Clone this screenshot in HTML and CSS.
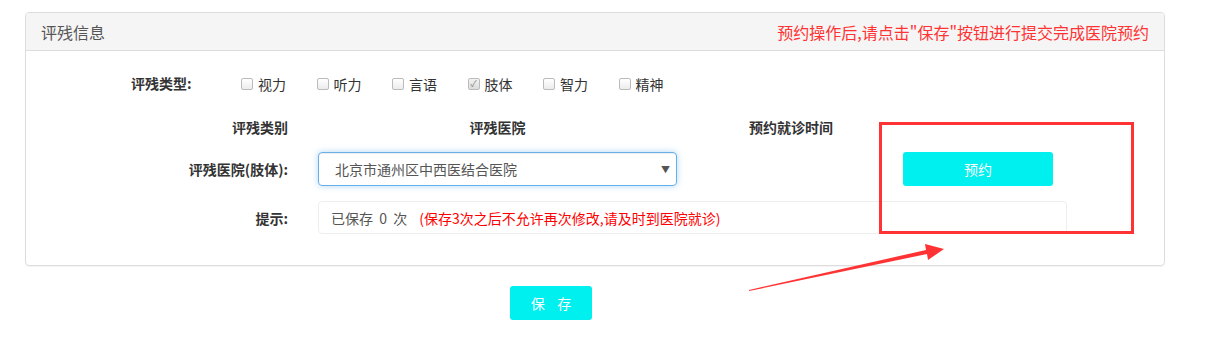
FILE: index.html
```html
<!DOCTYPE html>
<html lang="zh-CN">
<head>
  <meta charset="UTF-8">
  <title>评残信息</title>
  <link rel="stylesheet" href="styles.css">
</head>
<body>
  <!-- 评残信息 panel -->
  <div class="panel">
    <div class="panel-heading">
      <span class="panel-title">评残信息</span>
      <span class="panel-tip">预约操作后,请点击"保存"按钮进行提交完成医院预约</span>
    </div>
    <div class="panel-body">
      <div class="type-row">
        <span class="type-label">评残类型:</span>
        <label class="check"><span class="box"></span>视力</label>
        <label class="check"><span class="box"></span>听力</label>
        <label class="check"><span class="box"></span>言语</label>
        <label class="check"><span class="box checked">✓</span>肢体</label>
        <label class="check"><span class="box"></span>智力</label>
        <label class="check"><span class="box"></span>精神</label>
      </div>

      <div class="head-row">
        <span class="form-label">评残类别</span>
        <span class="head-hospital">评残医院</span>
        <span class="head-time">预约就诊时间</span>
      </div>

      <div class="form-row">
        <span class="form-label">评残医院(肢体):</span>
        <div class="fake-select">
          <span>北京市通州区中西医结合医院</span>
          <span class="caret">▼</span>
        </div>
        <button class="btn btn-book">预约</button>
      </div>

      <div class="form-row tip-row">
        <span class="form-label">提示:</span>
        <div class="tip-box">
          <span class="saved">已保存&nbsp;&nbsp;0&nbsp;&nbsp;次</span>
          <span class="warn">(保存3次之后不允许再次修改,请及时到医院就诊)</span>
        </div>
      </div>
    </div>
  </div>

  <div class="save-row">
    <button class="btn btn-save">保&nbsp;&nbsp;&nbsp;&nbsp;存</button>
  </div>

  <!-- screenshot annotation: red box and arrow -->
  <svg class="annotation" width="1209" height="343" viewBox="0 0 1209 343">
    <rect x="880.5" y="123.5" width="252" height="109" fill="none" stroke="#f33" stroke-width="3"/>
    <polygon points="749,291 927,254 928,260 944,249 925,244 926,250 749,290" fill="#f33"/>
  </svg>
</body>
</html>
```

FILE: styles.css
```css
* {
  margin: 0;
  padding: 0;
  box-sizing: border-box;
}

body {
  font-family: "Noto Sans CJK SC", "Liberation Sans", sans-serif;
  font-size: 14px;
  color: #333;
  background: #fff;
  position: relative;
  width: 1209px;
  height: 343px;
  overflow: hidden;
}

/* Panel */
.panel {
  margin: 12px 0 0 25px;
  width: 1140px;
  border: 1px solid #ddd;
  border-radius: 4px;
  box-shadow: 0 1px 1px rgba(0, 0, 0, 0.05);
}

.panel-heading {
  height: 38px;
  padding: 0 15px;
  background: #f5f5f5;
  border-bottom: 1px solid #ddd;
  border-radius: 3px 3px 0 0;
  display: flex;
  align-items: center;
  justify-content: space-between;
  font-size: 16px;
}

.panel-title {
  color: #555;
}

.panel-tip {
  color: #f33;
}

.panel-body {
  padding: 16px 0 31px;
}

/* Checkbox row */
.type-row {
  height: 32px;
  display: flex;
  align-items: center;
  padding-left: 105px;
}

.type-label {
  font-size: 14px;
  font-weight: bold;
  width: 110px;
}

.check {
  display: flex;
  align-items: center;
  width: 75.5px;
  font-size: 14px;
  color: #333;
  margin-top: 2px;
}

.box {
  width: 12px;
  height: 12px;
  border: 1px solid #bbb;
  border-radius: 2px;
  background: linear-gradient(#fff, #ececec);
  margin-right: 5px;
  font-size: 9px;
  line-height: 10px;
  text-align: center;
  color: #888;
}

.box.checked {
  background: linear-gradient(#f2f2f2, #dcdcdc);
}

/* Header + form rows */
.head-row {
  margin-top: 18px;
  height: 20px;
  display: flex;
  align-items: center;
  font-size: 14px;
  font-weight: bold;
}

.form-label {
  width: 262px;
  text-align: right;
  font-size: 14px;
  font-weight: bold;
}

.head-hospital {
  margin-left: 30px;
  width: 359px;
  text-align: center;
}

.head-time {
  margin-left: 1px;
  width: 226px;
  text-align: center;
}

.form-row {
  margin-top: 15px;
  display: flex;
  align-items: center;
}

.fake-select {
  margin-left: 30px;
  width: 359px;
  height: 34px;
  border: 1px solid #66afe9;
  border-radius: 4px;
  box-shadow: inset 0 1px 1px rgba(0, 0, 0, 0.075), 0 0 6px rgba(102, 175, 233, 0.5);
  display: flex;
  align-items: center;
  justify-content: space-between;
  padding: 0 6px 0 16px;
  color: #555;
}

.caret {
  font-size: 9px;
  color: #555;
}

.btn {
  border: none;
  border-radius: 3px;
  background: #00efef;
  color: #fff;
  font-family: inherit;
  font-size: 14px;
  cursor: pointer;
}

.btn-book {
  margin-left: 226px;
  width: 150px;
  height: 34px;
}

.tip-row {
  margin-top: 15px;
}

.tip-box {
  margin-left: 30px;
  width: 749px;
  height: 33px;
  border: 1px solid #eee;
  border-radius: 4px;
  display: flex;
  align-items: center;
  padding-left: 12px;
}

.saved {
  color: #555;
  margin-right: 12px;
}

.warn {
  color: #f00;
}

/* Save button */
.save-row {
  padding: 20px 0 0 510px;
}

.btn-save {
  width: 82px;
  height: 34px;
}

/* Annotation overlay */
.annotation {
  position: absolute;
  left: 0;
  top: 0;
  pointer-events: none;
}
```
